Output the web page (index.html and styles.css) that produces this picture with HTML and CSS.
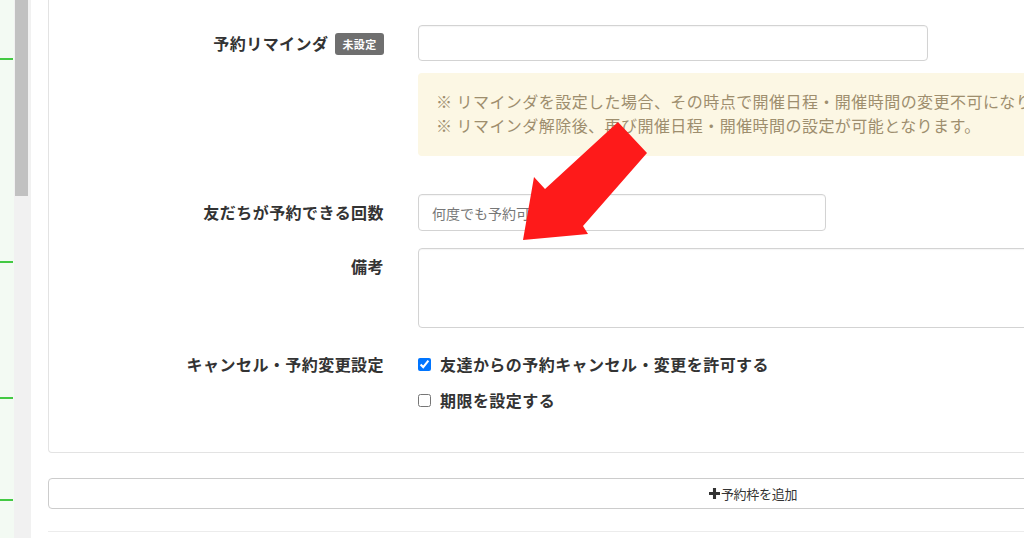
FILE: index.html
```html
<!DOCTYPE html>
<html lang="ja">
<head>
    <meta charset="UTF-8">
    <meta name="viewport" content="width=device-width, initial-scale=1.0">
    <title>予約枠設定</title>
    <link rel="stylesheet" href="styles.css">
</head>
<body>

<div class="side-menu">
    <div class="menu-item item-1"></div>
    <div class="menu-item item-2"></div>
    <div class="menu-item item-3"></div>
    <div class="menu-item item-4"></div>
</div>

<div class="scroll-track">
    <div class="scroll-thumb"></div>
</div>

<div class="main">
    <div class="slot-card">
        <div class="form-row row-reminder">
            <label class="form-label">予約リマインダ <span class="badge">未設定</span></label>
            <div class="form-field">
                <input type="text" class="form-input input-reminder">
                <div class="notice">
                    ※ リマインダを設定した場合、その時点で開催日程・開催時間の変更不可になります。<br>
                    ※ リマインダ解除後、再び開催日程・開催時間の設定が可能となります。
                </div>
            </div>
        </div>

        <div class="form-row row-count">
            <label class="form-label">友だちが予約できる回数</label>
            <div class="form-field">
                <input type="text" class="form-input input-count" placeholder="何度でも予約可能">
            </div>
        </div>

        <div class="form-row row-note">
            <label class="form-label label-top">備考</label>
            <div class="form-field">
                <textarea class="form-input note-area"></textarea>
            </div>
        </div>

        <div class="form-row row-cancel">
            <label class="form-label label-top">キャンセル・予約変更設定</label>
            <div class="form-field check-list">
                <label class="check-item"><input type="checkbox" checked> 友達からの予約キャンセル・変更を許可する</label>
                <label class="check-item"><input type="checkbox"> 期限を設定する</label>
            </div>
        </div>
    </div>

    <button class="add-slot-btn">
        <svg class="plus-icon" viewBox="0 0 10 10" width="11" height="11"><path d="M3.6 0h2.8v3.6H10v2.8H6.4V10H3.6V6.4H0V3.6h3.6z" fill="#333"/></svg>予約枠を追加
    </button>

    <div class="next-card"></div>
</div>

<!-- annotation arrow drawn over the screenshot -->
<svg class="red-arrow" width="1024" height="538" viewBox="0 0 1024 538">
    <polygon points="523,240 534,177 545,189 618,122 647,153 583,226 588,234" fill="#fe1a1a"/>
</svg>

</body>
</html>
```

FILE: styles.css
```css
/* Reservation slot form */
body {
    font-family: "Noto Sans CJK JP", "Noto Sans", sans-serif;
    margin: 0;
    padding: 0;
    display: flex;
    height: 538px;
    overflow: hidden;
    background-color: #fff;
    color: #333;
}

.side-menu {
    width: 14px;
    flex-shrink: 0;
    background-color: #f3faf3;
}

.menu-item {
    border-bottom: 2px solid #43c943;
    margin-right: 1px;
}

.item-1 { height: 58px; }
.item-2 { height: 201px; }
.item-3 { height: 134px; }
.item-4 { height: 100px; }

.scroll-track {
    width: 17px;
    flex-shrink: 0;
    background-color: #f1f1f1;
}

.scroll-thumb {
    width: 13px;
    height: 196px;
    margin-left: 1px;
    background-color: #c1c1c1;
}

.main {
    padding-left: 17px;
    width: 1410px;
    flex-shrink: 0;
}

.slot-card {
    border: 1px solid #e3e3e3;
    border-top: none;
    border-radius: 0 0 4px 4px;
    padding: 25px 15px 40px 0;
}

.form-row {
    display: grid;
    grid-template-columns: 335px 1fr;
    column-gap: 34px;
}

.row-reminder { margin-bottom: 38px; }
.row-count { margin-bottom: 17px; }
.row-note { margin-bottom: 24px; }

.form-label {
    text-align: right;
    font-weight: bold;
    font-size: 16px;
    letter-spacing: 0.45px;
    line-height: 36px;
    white-space: nowrap;
}

.label-top {
    line-height: 24px;
    padding-top: 6px;
}

.row-cancel .label-top {
    padding-top: 0;
}

.badge {
    display: inline-block;
    background-color: #6f6f6f;
    color: #fff;
    font-size: 11px;
    letter-spacing: 0.3px;
    line-height: 22px;
    padding: 0 8px;
    border-radius: 3px;
    vertical-align: 1px;
    margin-left: 2px;
    margin-right: -0.45px;
}

.form-input {
    display: block;
    box-sizing: border-box;
    border: 1px solid #d3d3d3;
    border-radius: 4px;
    padding: 6px 13px;
    font-family: inherit;
    font-size: 14px;
    color: #555;
    box-shadow: inset 0 1px 1px rgba(0, 0, 0, 0.04);
}

.form-input::placeholder {
    color: #777;
}

.input-reminder {
    width: 510px;
    height: 36px;
}

.input-count {
    width: 408px;
    height: 37px;
}

.note-area {
    width: 100%;
    height: 80px;
    resize: none;
}

.notice {
    margin-top: 12px;
    background-color: #fcf7e4;
    color: #9e8e6e;
    border-radius: 4px;
    padding: 16px 18px 19px;
    font-size: 16px;
    letter-spacing: 0.45px;
    line-height: 24px;
    white-space: nowrap;
}

.check-list {
    display: flex;
    flex-direction: column;
    gap: 12px;
}

.check-item {
    display: flex;
    align-items: center;
    font-weight: bold;
    font-size: 16px;
    letter-spacing: 0.45px;
    line-height: 24px;
    white-space: nowrap;
}

.check-item input {
    width: 13px;
    height: 13px;
    margin: 0 9px 0 0;
}

.add-slot-btn {
    display: flex;
    justify-content: center;
    align-items: center;
    width: 100%;
    height: 31px;
    margin-top: 25px;
    background-color: #fff;
    border: 1px solid #ccc;
    border-radius: 4px;
    font-family: inherit;
    font-size: 13px;
    color: #333;
    letter-spacing: -0.3px;
}

.plus-icon {
    margin-right: 1px;
}

.next-card {
    margin-top: 22px;
    border-top: 1px solid #ececec;
    height: 20px;
}

.red-arrow {
    position: absolute;
    left: 0;
    top: 0;
    pointer-events: none;
}
```
